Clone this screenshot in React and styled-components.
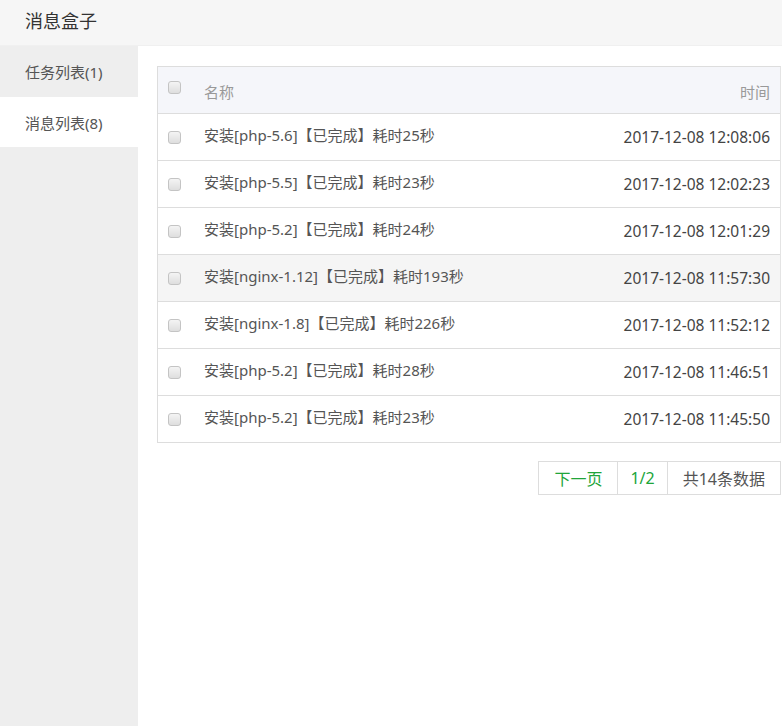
import React from "react";
import styled, { createGlobalStyle } from "styled-components";

const Global = createGlobalStyle`
  html, body { margin: 0; padding: 0; background: #fff; }
  body { font-family: "Noto Sans", "Noto Sans CJK SC", sans-serif; }
`;

const Page = styled.div`
  width: 782px;
  height: 726px;
  display: flex;
  flex-direction: column;
  overflow: hidden;
`;

const Header = styled.div`
  height: 46px;
  flex: none;
  background: #f6f6f6;
  border-bottom: 1px solid #f0f0f0;
  box-sizing: border-box;
  display: flex;
  align-items: center;
  padding-left: 25px;
  font-size: 18px;
  color: #333;
  padding-bottom: 6px;
`;

const Body = styled.div`
  flex: 1;
  display: flex;
`;

const Sidebar = styled.div`
  width: 138px;
  flex: none;
  background: #eeeeee;
  display: flex;
  flex-direction: column;
`;

const NavItem = styled.div`
  height: ${(p) => (p.$first ? 51 : 50)}px;
  display: flex;
  align-items: center;
  padding-left: 25px;
  font-size: 15px;
  color: #555;
  background: ${(p) => (p.$active ? "#fff" : "transparent")};
`;

const Main = styled.div`
  flex: 1;
  padding: 20px 1px 0 19px;
`;

const Table = styled.div`
  border: 1px solid #dddddd;
  border-right-color: #e4e4e4;
`;

const Row = styled.div`
  height: ${(p) => (p.$head ? 46 : 47)}px;
  box-sizing: border-box;
  display: flex;
  align-items: center;
  padding: 0 10px 0 10px;
  border-top: ${(p) => (p.$head ? "none" : "1px solid #dddddd")};
  background: ${(p) => (p.$head ? "#f5f6fa" : p.$hover ? "#f5f5f5" : "#fff")};
  font-size: 15px;
  color: ${(p) => (p.$head ? "#999" : "#555")};
`;

const Check = styled.span`
  width: 13px;
  height: 13px;
  box-sizing: border-box;
  border: 1px solid #c4c4c4;
  border-radius: 3px;
  background: linear-gradient(#f4f4f4, #dedede);
  flex: none;
  margin-top: ${(p) => (p.$head ? "-5px" : "0")};
`;

const Name = styled.span`
  flex: 1;
  margin-left: 23px;
  margin-top: ${(p) => (p.$head ? "2px" : "-5px")};
  white-space: nowrap;
`;

const Time = styled.span`
  color: ${(p) => (p.$head ? "#999" : "#444")};
  font-size: ${(p) => (p.$head ? "15px" : "15.5px")};
  margin-top: ${(p) => (p.$head ? "2px" : "0")};
  white-space: nowrap;
`;

const Pager = styled.div`
  display: flex;
  justify-content: flex-end;
  margin-top: 18px;
`;

const PageCell = styled.span`
  height: 34px;
  box-sizing: border-box;
  border: 1px solid #dddddd;
  margin-left: -1px;
  padding: 0 ${(p) => p.$pad}px;
  display: flex;
  align-items: center;
  font-size: 16px;
  color: ${(p) => (p.$green ? "#20a53a" : "#555")};
`;

const rows = [
  ["安装[php-5.6]【已完成】耗时25秒", "2017-12-08 12:08:06"],
  ["安装[php-5.5]【已完成】耗时23秒", "2017-12-08 12:02:23"],
  ["安装[php-5.2]【已完成】耗时24秒", "2017-12-08 12:01:29"],
  ["安装[nginx-1.12]【已完成】耗时193秒", "2017-12-08 11:57:30"],
  ["安装[nginx-1.8]【已完成】耗时226秒", "2017-12-08 11:52:12"],
  ["安装[php-5.2]【已完成】耗时28秒", "2017-12-08 11:46:51"],
  ["安装[php-5.2]【已完成】耗时23秒", "2017-12-08 11:45:50"],
];

export default function App() {
  return (
    <Page>
      <Global />
      <Header>消息盒子</Header>
      <Body>
        <Sidebar>
          <NavItem $first>任务列表(1)</NavItem>
          <NavItem $active>消息列表(8)</NavItem>
        </Sidebar>
        <Main>
          <Table>
            <Row $head>
              <Check $head />
              <Name $head>名称</Name>
              <Time $head>时间</Time>
            </Row>
            {rows.map(([n, t], i) => (
              <Row key={i} $hover={i === 3}>
                <Check />
                <Name>{n}</Name>
                <Time>{t}</Time>
              </Row>
            ))}
          </Table>
          <Pager>
            <PageCell $green $pad={15}>下一页</PageCell>
            <PageCell $green $pad={12}>1/2</PageCell>
            <PageCell $pad={15}>共14条数据</PageCell>
          </Pager>
        </Main>
      </Body>
    </Page>
  );
}
